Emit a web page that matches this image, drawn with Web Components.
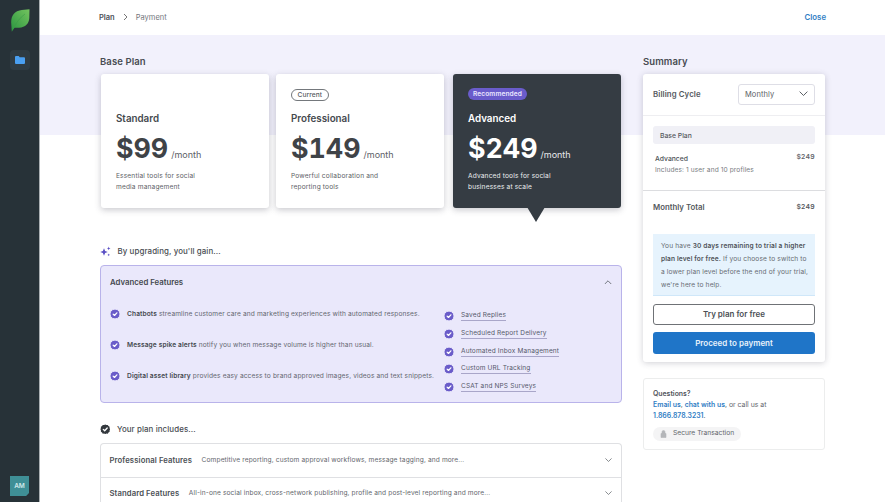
<!DOCTYPE html>
<html><head><meta charset="utf-8"><style>
html,body{margin:0;padding:0;height:502px;overflow:hidden;background:#fff;font-family:Inter,"Liberation Sans",sans-serif;color:#3d4249}
</style></head><body>
<template id="t-check"><style>:host{display:inline-flex;flex:none;width:var(--s,10px);height:var(--s,10px)}svg{width:100%;height:100%;display:block}</style>
<svg viewBox="0 0 24 24"><path fill="var(--c,#6a5cc9)" d="M12 1l2.700 1.300 3-.3 1.600 2.500 2.600 1.600-.1 3L23 12l-1.100 2.900.1 3-2.600 1.600-1.600 2.500-3-.3L12 23l-2.700-1.300-3 .3-1.600-2.500-2.600-1.600.1-3L1 12l1.100-2.900-.1-3 2.600-1.600L6.300 2l3 .3z"/><path fill="none" stroke="#fff" stroke-width="3" stroke-linecap="round" stroke-linejoin="round" d="M7.500 12.300l3.200 3.200 5.800-6.300"/></svg></template>
<script>
const css=(s)=>`<style>${s}</style>`;
const chev=(d,c='#555b61',w=10)=>`<svg width="${w}" height="${w*.6}" viewBox="0 0 10 6" style="display:block;flex:none"><path d="${d==='up'?'M1 5l4-4 4 4':'M1 1l4 4 4-4'}" fill="none" stroke="${c}" stroke-width="1" stroke-linecap="round" stroke-linejoin="round"/></svg>`;
class Base extends HTMLElement{constructor(){super();this.attachShadow({mode:'open'}).innerHTML=this.render()}render(){return ''}a(n,d=''){return this.getAttribute(n)??d}}
customElements.define('x-check',class extends HTMLElement{constructor(){super();this.attachShadow({mode:'open'}).appendChild(document.getElementById('t-check').content.cloneNode(true))}});
customElements.define('x-sidebar',class extends Base{render(){return css(`:host{display:flex;flex:none;width:39px;flex-direction:column;align-items:center;background:#273238;border-right:1px solid #aab0b3;height:502px}
.logo{margin-top:9px;display:block}.nav{margin-top:18px;width:20px;height:20px;border-radius:4px;background:#2f3b42;display:flex;align-items:center;justify-content:center}.sp{flex:1}
.am{width:19px;height:20px;margin-bottom:6px;background:#3f8f96;clip-path:polygon(0 0,100% 0,100% 85%,85% 100%,0 100%);color:#cfeaec;font:600 6.5px Inter,sans-serif;display:flex;align-items:center;justify-content:center}`)+`
<svg class="logo" width="20" height="23" viewBox="0 0 20 23"><defs><linearGradient id="g" x1="0" y1="1" x2="1" y2="0"><stop offset="0" stop-color="#2a9440"/><stop offset="1" stop-color="#74c45f"/></linearGradient></defs><path fill="url(#g)" d="M19.500 .3L19.300 9C19 14.500 15.500 18.500 9 18.700L4.500 18.800 1.800 22.700 1.300 15.500C.8 9 2.500 3 9.500 1.500 12.500.8 16 .8 19.500 .3z"/><path d="M3.500 19.500C6 14 9.500 9 15 5" stroke="#3a9a48" stroke-width=".6" fill="none"/></svg>
<div class="nav"><svg width="10" height="8" viewBox="0 0 10 8"><path fill="#4a9ff0" d="M0 1a1 1 0 011-1h2.700l1 1.200H9a1 1 0 011 1V7a1 1 0 01-1 1H1a1 1 0 01-1-1z"/></svg></div><div class="sp"></div><div class="am">AM</div>`}});
customElements.define('x-topbar',class extends Base{render(){return css(`:host{display:flex;flex:none;height:35px;box-sizing:border-box;padding:0 59px 1px 59px;align-items:center;justify-content:space-between;background:#fff;font-size:7.5px}
.l{display:flex;align-items:center;gap:8px}b{font-weight:600;color:#4b4f55}span{color:#73777c}a{color:#2f7dc4;font-weight:600;font-size:7.800px}`)+`<div class="l"><b>Plan</b><svg width="5" height="8" viewBox="0 0 5 8"><path d="M1 1l3 3-3 3" fill="none" stroke="#666" stroke-width=".9"/></svg><span>Payment</span></div><a>Close</a>`}});
customElements.define('x-plan-card',class extends Base{render(){const dark=this.hasAttribute('dark');return css(`:host{display:flex;flex-direction:column;position:relative;box-sizing:border-box;height:134px;padding:14px 15px 0;border-radius:3px;background:${dark?'#353c43':'#fff'};color:${dark?'#fff':'#3f4347'};box-shadow:0 2px 6px rgba(60,60,80,.28)}
.top{height:14px;display:flex;align-items:center}
h3{margin:10px 0 0;font-size:9.800px;line-height:14px;font-weight:600;color:${dark?'#fff':'#45494e'}}
.p{display:flex;align-items:baseline;margin-top:6px;height:32px;line-height:32px}.p b{font-size:26.800px;font-weight:700;font-variant-numeric:tabular-nums;font-feature-settings:"tnum"}.p span{font-size:9px;margin-left:3px;color:${dark?'#e9eaec':'#5c6066'}}
p{margin:6.500px 0 0;font-size:6.600px;line-height:11px;letter-spacing:.15px;color:${dark?'#eceef0':'#5d6166'};max-width:100px}
.arrow{position:absolute;left:74px;top:133px;width:0;height:0;border:9.500px solid transparent;border-top:15.500px solid #353c43;border-bottom:0}`)+`<div class="top"><slot name="badge"></slot></div><h3>${this.a('name')}</h3><div class="p"><b>${this.a('price')}</b><span>/month</span></div><p><slot></slot></p>${dark?'<div class="arrow"></div>':''}`}});
customElements.define('x-badge',class extends Base{render(){const r=this.hasAttribute('rec');return css(`:host{display:inline-flex;align-items:center;box-sizing:border-box;height:${r?'11.500px':'12.500px'};margin-top:${r?'-2px':'0'};padding:0 ${r?'5px':'5.500px'};border-radius:7px;font-size:6.600px;line-height:1;font-weight:${r?600:500};letter-spacing:.1px;background:${r?'#6a5ccb':'#fff'};color:${r?'#e9e6ff':'#55595e'};${r?'':'border:1px solid #74787c;'}}`)+`<slot></slot>`}});
customElements.define('x-section-head',class extends Base{render(){return css(`:host{display:flex;align-items:center;gap:6.500px;height:18px;font-size:7.900px;color:#484c52;font-weight:500;letter-spacing:.1px}`)+`<slot name="icon"></slot><slot></slot>`}});
customElements.define('x-feature',class extends Base{render(){return css(`:host{display:flex;align-items:center;gap:7px;height:10px;white-space:nowrap;font-size:6.600px;letter-spacing:.12px;color:#63666f}::slotted(b){font-weight:600;color:#45484f}`)+`<x-check></x-check><div><slot></slot></div>`}});
customElements.define('x-link-feature',class extends Base{render(){return css(`:host{display:flex;align-items:center;gap:7px;height:10px;white-space:nowrap;font-size:6.500px;letter-spacing:.15px;color:#55586a}span{border-bottom:1px solid #a9a6c9;line-height:9px}`)+`<x-check></x-check><span><slot></slot></span>`}});
customElements.define('x-advanced',class extends Base{render(){return css(`:host{display:block;width:522.500px;margin:5px 0 0 -.5px;height:137.500px;box-sizing:border-box;background:#eae8fb;border:1px solid #b9b3ea;border-radius:4px;padding:0 9.500px}
.h{display:flex;justify-content:space-between;align-items:center;height:32px;font-size:7.800px;font-weight:600;color:#45484f}
.b{display:flex;justify-content:space-between}
.l{display:flex;flex-direction:column;gap:21px;padding-top:11.300px}.r{display:flex;flex-direction:column;gap:7.800px;padding-top:13px;width:167.500px}`)+`<div class="h"><span>Advanced Features</span>${chev('up','#555b61',8)}</div><div class="b"><div class="l"><slot name="left"></slot></div><div class="r"><slot name="right"></slot></div></div>`}});
customElements.define('x-accordion',class extends Base{render(){return css(`:host{display:flex;align-items:center;height:33.500px;box-sizing:border-box;padding:0 9px;font-size:7.700px;background:#fff;border:1px solid #dfe0e3;color:#55595e;white-space:nowrap}
b{font-weight:600;color:#4b4f55;margin-right:9.500px;letter-spacing:.1px}span{flex:1;font-size:6.600px;letter-spacing:.12px;color:#63666c}`)+`<b>${this.a('name')}</b><span><slot></slot></span>${chev('down','#555b61',7)}`}});
customElements.define('x-select',class extends Base{render(){return css(`:host{display:flex;align-items:center;justify-content:space-between;box-sizing:border-box;width:77px;height:21px;padding:0 6px;border:1px solid #dedee6;border-radius:3px;background:#fff;font-size:7.500px;font-weight:400;color:#5a5e64}`)+`<slot></slot>${chev('down','#4a4e54',9)}`}});
customElements.define('x-summary',class extends Base{render(){return css(`:host{display:flex;flex-direction:column;background:#fff;border-radius:3px;box-shadow:0 1px 6px rgba(60,60,80,.24);box-sizing:border-box;height:288.300px}
.bc{display:flex;align-items:center;justify-content:space-between;height:42px;flex:none;padding:0 10px 1px;box-sizing:border-box;border-bottom:1px solid #eeeef1;font-size:7.800px;font-weight:600;color:#55595e;letter-spacing:.1px}
.plan{height:75px;flex:none;padding:10px 10px 0;box-sizing:border-box;border-bottom:1px solid #dcdde0}
.bp{height:18px;border-radius:3px;background:#f0f0f6;display:flex;align-items:center;padding-left:7px;font-size:6.800px;font-weight:500;color:#55595e}
.row{display:flex;justify-content:space-between;margin-top:10px;padding-left:2px;font-size:6.800px;color:#4c5056;font-weight:500}.row .pr{font-weight:600;margin-top:-2px;letter-spacing:.3px;color:#63666c}
.sub{font-size:6.600px;margin-top:2.500px;color:#777b80;letter-spacing:.1px;font-weight:400}
.tot{display:flex;justify-content:space-between;padding:11px 10px 0;height:42.500px;flex:none;box-sizing:border-box;font-size:7.800px;font-weight:600;color:#55595e}.tot i{font-style:normal;font-size:6.800px;letter-spacing:.3px}
.trial{margin:0 10px;height:62.500px;flex:none;box-sizing:border-box;background:#e6f3fd;border-bottom:1px solid #cfe7f9;padding:6.500px 8px 0;font-size:6.600px;line-height:12.900px;color:#666b72;letter-spacing:.13px;white-space:nowrap}.trial b{font-weight:600;color:#4f545a}
.btn{margin:7px 10px 0;height:21.500px;flex:none;box-sizing:border-box;border-radius:3px;display:flex;align-items:center;justify-content:center;font-size:8px;font-weight:600}
.o{margin-top:7.500px;border:1px solid #6f7276;color:#4b4f55;background:#fff}.f{background:#1f75c8;color:#e8f2fb}`)+`<div class="bc"><span>Billing Cycle</span><x-select>Monthly</x-select></div>
<div class="plan"><div class="bp">Base Plan</div><div class="row"><div>Advanced<div class="sub">Includes: 1 user and 10 profiles</div></div><div class="pr">$249</div></div></div>
<div class="tot"><span>Monthly Total</span><i>$249</i></div>
<div class="trial">You have <b>30 days remaining to trial a higher<br>plan level for free.</b> If you choose to switch to<br>a lower plan level before the end of your trial,<br>we're here to help.</div>
<div class="btn o">Try plan for free</div><div class="btn f">Proceed to payment</div>`}});
customElements.define('x-questions',class extends Base{render(){return css(`:host{display:block;box-sizing:border-box;height:72px;margin-top:15.400px;padding:9px 9px 0;border:1px solid #eceded;border-radius:3px;font-size:6.900px;line-height:11.200px;color:#63666c}
b{font-weight:600;color:#4f535a}a{color:#2f7dc4;font-weight:600}.s{display:inline-flex;align-items:center;gap:6px;height:14px;margin-top:5.500px;padding:0 7px;border-radius:7px;background:#f4f4f5;font-size:6.700px;color:#63666c}`)+`<b>Questions?</b><br><a>Email us</a>, <a>chat with us</a>, or call us at<br><a>1.866.878.3231</a>.<br><div class="s"><svg width="7" height="8" viewBox="0 0 7 8"><path d="M1 3.500h5V7.500H1zM2 3.500V2a1.500 1.500 0 013 0v1.500" fill="#b4b6b9" stroke="#b4b6b9" stroke-width=".6"/></svg>Secure Transaction</div>`}});
customElements.define('x-app',class extends Base{render(){return css(`:host{display:flex;height:502px;overflow:hidden}
.main{flex:1;display:flex;flex-direction:column;min-width:0}
.c{flex:1;display:flex;gap:21px;padding:0 60px;background:linear-gradient(#f2f1fc 100px,#fff 100px);overflow:hidden}
.left{width:522px;flex:none}.right{width:182px;flex:none}`)+`<x-sidebar></x-sidebar><div class="main"><x-topbar></x-topbar><div class="c"><div class="left"><slot name="left"></slot></div><div class="right"><slot name="right"></slot></div></div></div>`}});
customElements.define('x-left',class extends Base{render(){return css(`:host{display:block}
h2{margin:0;height:39px;line-height:53px;font-size:9.500px;font-weight:600;color:#484c52;letter-spacing:.1px}
.cards{display:flex;padding-left:1px}.cards x-plan-card{width:168px;flex:none}.cards x-plan-card:first-child{width:167.500px}.cards x-plan-card:nth-child(2){margin-left:7.500px}.cards x-plan-card:nth-child(3){margin-left:9px}
.g1{margin-top:34px}.g2{margin-top:17.500px}.stack{margin:5px 0 0 -.5px;width:522.500px;display:flex;flex-direction:column}
.stack x-accordion:first-child{border-radius:4px 4px 0 0;border-bottom:0}`)+`<h2>Base Plan</h2><div class="cards">
<x-plan-card name="Standard" price="$99">Essential tools for social media management</x-plan-card>
<x-plan-card name="Professional" price="$149"><x-badge slot="badge">Current</x-badge>Powerful collaboration and reporting tools</x-plan-card>
<x-plan-card dark name="Advanced" price="$249"><x-badge rec slot="badge">Recommended</x-badge>Advanced tools for social businesses at scale</x-plan-card></div>
<x-section-head class="g1"><svg slot="icon" width="11" height="11" viewBox="0 0 11 11"><path fill="#5a4fc4" d="M4 2.200l1.100 2.700L7.800 6 5.100 7.100 4 9.800 2.900 7.100.2 6 2.900 4.900z"/><path fill="#5a4fc4" d="M8.700 .6l.5 1.300 1.300.5-1.300.5-.5 1.300-.5-1.300-1.300-.5 1.300-.5zM8.700 7.500l.4 1 1 .4-1 .4-.4 1-.4-1-1-.4 1-.4z"/></svg>By upgrading, you'll gain...</x-section-head>
<x-advanced>
<x-feature slot="left"><b>Chatbots</b> streamline customer care and marketing experiences with automated responses.</x-feature>
<x-feature slot="left"><b>Message spike alerts</b> notify you when message volume is higher than usual.</x-feature>
<x-feature slot="left"><b>Digital asset library</b> provides easy access to brand approved images, videos and text snippets.</x-feature>
<x-link-feature slot="right">Saved Replies</x-link-feature><x-link-feature slot="right">Scheduled Report Delivery</x-link-feature><x-link-feature slot="right">Automated Inbox Management</x-link-feature><x-link-feature slot="right">Custom URL Tracking</x-link-feature><x-link-feature slot="right">CSAT and NPS Surveys</x-link-feature>
</x-advanced>
<x-section-head class="g2"><x-check slot="icon" style="--c:#33383d;--s:10.500px"></x-check>Your plan includes...</x-section-head>
<div class="stack"><x-accordion name="Professional Features">Competitive reporting, custom approval workflows, message tagging, and more...</x-accordion><x-accordion name="Standard Features">All-in-one social inbox, cross-network publishing, profile and post-level reporting and more...</x-accordion></div>`}});
customElements.define('x-right',class extends Base{render(){return css(`:host{display:block}h2{margin:0;height:39px;line-height:53px;font-size:9.500px;font-weight:600;color:#484c52;letter-spacing:.1px}`)+`<h2>Summary</h2><x-summary></x-summary><x-questions></x-questions>`}});
</script>
<x-app><x-left slot="left"></x-left><x-right slot="right"></x-right></x-app>
</body></html>
